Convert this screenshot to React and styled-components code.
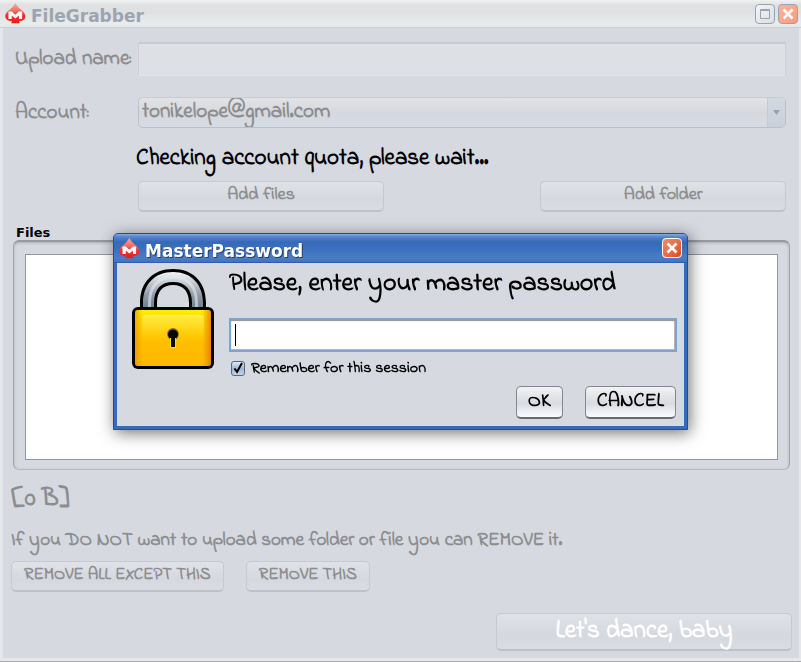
import React from "react";
import styled, { createGlobalStyle } from "styled-components";

const HAND = `"Indie Flower", Lato, sans-serif`;
const SYSTEM = `"DejaVu Sans", sans-serif`;

const GlobalStyle = createGlobalStyle`
  * { box-sizing: border-box; }
  body { margin: 0; background: #d6d9e0; font-variant-ligatures: none; }
  button, input, select { font: inherit; font-variant-ligatures: none; }
`;

const Window = styled.div`
  display: flex;
  flex-direction: column;
  min-height: 100vh;
  background: #d6d9e0;
  border-bottom: 1px solid #a9abad;
  font-family: ${HAND};
  font-weight: bold;
  color: #8c8d8f;
`;

const TitleBar = styled.header`
  display: flex;
  align-items: center;
  gap: 5px;
  height: 28px;
  padding: 0 3px 0 5px;
  background: linear-gradient(#f0f2f2 0, #dfe1e2 5px, #dfe1e2 12px, #e9ebec 24px, #e4e6e7 100%);
  border-bottom: 1px solid #cdcfd1;
`;

const Title = styled.h1`
  flex: 1;
  margin: 0;
  padding-top: 4px;
  font: bold 17px/22px ${SYSTEM};
  color: #9ba5b2;
`;

const WindowButton = styled.button`
  display: grid;
  place-items: center;
  width: 20px;
  height: 20px;
  padding: 0;
  border: 1px solid ${(p) => (p.$active ? "#fff" : "#98a3b3")};
  border-radius: 4px;
  background: ${(p) =>
    p.$active
      ? "linear-gradient(135deg, #f08d6c, #e4683e 60%, #d94a1c)"
      : p.$close
        ? "linear-gradient(135deg, #ffb49b, #f79a7d)"
        : "linear-gradient(135deg, #f4f5f6, #dcdee0)"};
  & + & { margin-left: -2px; }
`;

const Content = styled.main`
  flex: 1;
  display: flex;
  flex-direction: column;
  padding: 14px 7px 7px 8px;
  border: solid #e6e7ea;
  border-width: 0 2px 3px 3px;
`;

const Form = styled.div`
  display: grid;
  grid-template-columns: 123px 1fr;
  row-gap: 21px;
  align-items: center;
  padding: 0 6px 0 4px;
`;

const FieldLabel = styled.label`
  font-size: 21px;
  line-height: 24px;
`;

const NameInput = styled.input`
  width: 100%;
  height: 34px;
  padding: 4px 6px;
  border: 1px solid #ced1d6;
  border-top: 2px solid #c8cbd0;
  border-bottom-color: #e2e4e8;
  background: #dde0e5;
  font-size: 21px;
`;

const SelectBox = styled.div`
  display: grid;
  grid-template-columns: 1fr 18px;
  height: 31px;
  border: 1px solid #b9c0ca;
  border-top-color: #c8cbd1;
  border-radius: 5px;
  background: linear-gradient(#e1e3e7, #d6d8dd 50%, #d7dbe4);
  overflow: hidden;
`;

const AccountSelect = styled.select`
  grid-column: 1 / 3;
  grid-row: 1;
  appearance: none;
  width: 100%;
  height: 29px;
  padding: 0 22px 0 3px;
  border: 0;
  background: transparent;
  color: #8c8d8f;
  opacity: 1;
  font-size: 21px;
  line-height: 29px;
`;

const SelectArrow = styled.span`
  grid-column: 2;
  grid-row: 1;
  display: grid;
  place-items: center;
  pointer-events: none;
  border-left: 1px solid #c3cbd6;
  background: linear-gradient(#d4d9e0, #c8d0db);
`;

const Status = styled.p`
  margin: 19px 0 10px;
  padding-left: 125px;
  font-size: 23px;
  line-height: 24px;
  color: #000;
`;

const AddRow = styled.div`
  display: grid;
  grid-template-columns: 246px 246px;
  justify-content: space-between;
  padding: 0 6px 0 127px;
`;

const BUTTON_FONT = { small: "17px", medium: "18px", large: "25px" };

const SoftButton = styled.button`
  height: ${(p) => (p.$size === "large" ? "38px" : "31px")};
  padding: 0 12px 2px;
  border: 1px solid #c6c9cd;
  border-bottom: 2px solid #bec1c6;
  border-radius: 5px;
  background: linear-gradient(#dfe2e6, #d5d8df 60%, #d9dce0);
  color: ${(p) => (p.$size === "large" ? "#fff" : "#8c8d8f")};
  font-size: ${(p) => BUTTON_FONT[p.$size]};
  line-height: 24px;
  white-space: nowrap;
`;

const FilesGroup = styled.section`
  flex: 1;
  display: flex;
  flex-direction: column;
  margin: 13px 2px 0;
`;

const FilesTitle = styled.h2`
  margin: 0;
  padding-left: 3px;
  font: bold 13px/15px ${SYSTEM};
  color: #000;
`;

const FilesFrame = styled.div`
  flex: 1;
  display: flex;
  padding: 12px 11px 9px;
  border: 1px solid #a2a5aa;
  border-top: 2px solid #96999d;
  border-bottom-color: #b6b9bf;
  border-radius: 6px;
  box-shadow: inset 0 1px 3px #abaeb4;
`;

const FilesList = styled.ul`
  flex: 1;
  margin: 0;
  padding: 0;
  list-style: none;
  background: #fff;
  border: 1px solid #9297a1;
`;

const Total = styled.p`
  margin: 14px 0 0;
  font-size: 25px;
  line-height: 30px;
`;

const Hint = styled.p`
  margin: 15px 0 8px;
  font-size: 19px;
  line-height: 24px;
`;

const RemoveRow = styled.div`
  display: flex;
  gap: 22px;
`;

const SubmitRow = styled.div`
  display: grid;
  grid-template-columns: 296px;
  justify-content: end;
  margin-top: 21px;
`;

const Overlay = styled.div`
  position: fixed;
  inset: 1px 0 0;
  display: grid;
  place-items: center;
`;

const Dialog = styled.section`
  width: 575px;
  max-width: 100%;
  border: 1px solid #234f91;
  border-radius: 5px 5px 0 0;
  background: #356bba;
  box-shadow: 2px 3px 16px rgba(0, 0, 0, 0.55);
  padding: 0 3px 3px;
  font-family: ${HAND};
  font-weight: bold;
  color: #000;
`;

const DialogBar = styled.header`
  display: flex;
  align-items: center;
  gap: 5px;
  height: 29px;
  margin: 0 -3px;
  padding: 0 5px;
  border-radius: 4px 4px 0 0;
  border-bottom: 1px solid #2c5fae;
  background: linear-gradient(#88aade 0, #5783c6 3px, #356ab8 8px, #3a70be 15px, #4c7cc7 24px, #4272bd 100%);
`;

const DialogTitle = styled.h2`
  flex: 1;
  margin: 0;
  padding-top: 5px;
  font: bold 17px/22px ${SYSTEM};
  color: #fff;
  text-shadow: 1px 1px 0 #23406d;
`;

const DialogBody = styled.form`
  display: grid;
  grid-template-columns: 82px 1fr;
  column-gap: 15px;
  padding: 6px 7px 7px 15px;
  background: #d6d9e0;
`;

const Fields = styled.div`
  display: flex;
  flex-direction: column;
  align-items: flex-start;
`;

const Prompt = styled.label`
  font-size: 26px;
  line-height: 30px;
  margin-bottom: 19px;
`;

const PasswordInput = styled.input`
  width: 100%;
  height: 34px;
  padding: 2px 4px;
  border: 2px solid #79a5d6;
  background: #fff;
  box-shadow: inset 0 1px 1px #929292, inset -1px -1px 0 #b8b8b8;
  font-size: 22px;
  outline: none;
  &:placeholder-shown {
    caret-color: transparent;
    background: linear-gradient(#000, #000) 4px center / 1px 22px no-repeat #fff;
  }
`;

const CheckLabel = styled.label`
  display: flex;
  align-items: center;
  gap: 6px;
  margin: 7px 0 9px 2px;
  font-size: 16px;
  line-height: 18px;
`;

const CheckBox = styled.span`
  display: grid;
  width: 14px;
  height: 15px;
  & > * { grid-area: 1 / 1; }
`;

const CheckInput = styled.input`
  appearance: none;
  margin: 0;
  border: 1px solid #55687f;
  border-radius: 3px;
  background: linear-gradient(#e2eaf3, #9fb6d0 50%, #c4d7e9);
  &:not(:checked) + svg { visibility: hidden; }
`;

const Actions = styled.div`
  align-self: flex-end;
  display: flex;
  gap: 22px;
  padding-right: 1px;
`;

const ActionButton = styled.button`
  height: 33px;
  padding: 0 11px;
  border: 1px solid #84878b;
  border-bottom: 2px solid #66696d;
  border-radius: 5px;
  background: linear-gradient(#f2f3f5, #d8dbe1 55%, #fafcff);
  font-size: 20px;
  line-height: 24px;
`;

function SpadeLogo({ faded }) {
  const id = faded ? "spadeFaded" : "spade";
  return (
    <svg width="21" height="21" viewBox="0 0 21 21" aria-hidden="true">
      <defs>
        <linearGradient id={id} x1="0" y1="0" x2="0" y2="1">
          <stop offset="0" stopColor={faded ? "#f7b1a8" : "#f3aaa6"} />
          <stop offset="0.4" stopColor="#ee6b62" />
          <stop offset="0.62" stopColor="#ef3025" />
          <stop offset="1" stopColor="#e81f13" />
        </linearGradient>
      </defs>
      <path
        fill={`url(#${id})`}
        d="M10.300 0C12 3 14 5 17 7.400c2.400 2 3.400 3.700 3.300 6.100-.2 3.400-3 5-6.300 4.200l.7 2.600H6.300l.6-2.600c-3.200.8-6.400-.8-6.600-4.200C.2 11 1.300 9.400 3.600 7.400 6.600 5 8.700 3 10.300 0z"
      />
      <path d="M3.500 16V8.500h3.200l3.600 3.200 3.600-3.200h3.200V16h-3.200v-3.600l-3.600 3.200-3.600-3.200V16z" fill="#fff" />
    </svg>
  );
}

function Cross() {
  return (
    <svg width="12" height="12" viewBox="0 0 12 12" aria-hidden="true">
      <path d="M1.500 1.500l9 9m0-9l-9 9" stroke="#fff" strokeWidth="2.600" />
    </svg>
  );
}

function Padlock() {
  return (
    <svg width="82" height="101" viewBox="0 0 82 101" aria-hidden="true">
      <defs>
        <linearGradient id="steel" x1="0" y1="0" x2="0" y2="1">
          <stop offset="0" stopColor="#f4f5f7" />
          <stop offset="0.25" stopColor="#c9ced5" />
          <stop offset="0.6" stopColor="#8e99a6" />
          <stop offset="1" stopColor="#6d7988" />
        </linearGradient>
        <linearGradient id="gold" x1="0" y1="0" x2="0" y2="1">
          <stop offset="0" stopColor="#ffee00" />
          <stop offset="0.2" stopColor="#ffd800" />
          <stop offset="0.6" stopColor="#ffbd00" />
          <stop offset="1" stopColor="#ffb800" />
        </linearGradient>
        <linearGradient id="goldEdge" x1="0" y1="0" x2="1" y2="0">
          <stop offset="0" stopColor="#e78900" stopOpacity="0.6" />
          <stop offset="0.1" stopColor="#e78900" stopOpacity="0" />
          <stop offset="0.88" stopColor="#e78900" stopOpacity="0" />
          <stop offset="1" stopColor="#dc7600" stopOpacity="0.8" />
        </linearGradient>
        <linearGradient id="gloss" x1="0" y1="0" x2="0" y2="1">
          <stop offset="0" stopColor="#fff57a" stopOpacity="0.6" />
          <stop offset="1" stopColor="#ffe040" stopOpacity="0" />
        </linearGradient>
      </defs>
      <path
        d="M8 44V34C8 13 21 0 41 0s33 13 33 34v10H57V34c0-12-6-18-16-18s-16 6-16 18v10z"
        fill="#000"
      />
      <path
        d="M11 42V34C11 15 23 3 41 3s30 12 30 31v8H60v-8c0-14-7-21-19-21s-19 7-19 21v8z"
        fill="url(#steel)"
      />
      <path d="M17.500 42v-8C17.500 18 26 8 41 8s23.500 10 23.500 26v8" fill="none" stroke="#e6eaef" strokeOpacity="0.6" strokeWidth="3" />
      <rect y="38" width="82" height="62" rx="6" fill="#000" />
      <rect x="3" y="41" width="76" height="56" rx="3" fill="url(#gold)" />
      <rect x="3" y="41" width="76" height="56" rx="3" fill="url(#goldEdge)" />
      <rect x="10" y="46" width="62" height="25" rx="2" fill="url(#gloss)" />
      <circle cx="41" cy="65" r="6" fill="#9c7300" />
      <circle cx="41" cy="65.500" r="5" fill="#090600" />
      <rect x="38" y="69" width="6" height="10" fill="#ffdf00" />
      <rect x="39" y="68" width="4" height="10" fill="#090600" />
    </svg>
  );
}

export default function App() {
  return (
    <>
      <GlobalStyle />
      <Window>
        <TitleBar>
          <SpadeLogo faded />
          <Title>FileGrabber</Title>
          <WindowButton type="button" aria-label="Maximize">
            <svg width="10" height="10" viewBox="0 0 10 10" aria-hidden="true">
              <path d="M.5.5h9v9h-9zM0 1.500h10" fill="none" stroke="#98a3b3" />
            </svg>
          </WindowButton>
          <WindowButton type="button" aria-label="Close window" $close>
            <Cross />
          </WindowButton>
        </TitleBar>
        <Content>
          <Form>
            <FieldLabel htmlFor="upload-name">Upload name:</FieldLabel>
            <NameInput id="upload-name" disabled />
            <FieldLabel htmlFor="account">Account:</FieldLabel>
            <SelectBox>
              <AccountSelect id="account" disabled defaultValue="tonikelope@gmail.com">
                <option>tonikelope@gmail.com</option>
              </AccountSelect>
              <SelectArrow>
                <svg width="7" height="5" viewBox="0 0 7 5" aria-hidden="true">
                  <path d="M0 0h7L3.500 5z" fill="#9aa2ad" />
                </svg>
              </SelectArrow>
            </SelectBox>
          </Form>
          <Status>Checking account quota, please wait...</Status>
          <AddRow>
            <SoftButton type="button" disabled $size="medium">Add files</SoftButton>
            <SoftButton type="button" disabled $size="medium">Add folder</SoftButton>
          </AddRow>
          <FilesGroup aria-labelledby="files-title">
            <FilesTitle id="files-title">Files</FilesTitle>
            <FilesFrame>
              <FilesList />
            </FilesFrame>
          </FilesGroup>
          <Total>[0 B]</Total>
          <Hint>If you DO NOT want to upload some folder or file you can REMOVE it.</Hint>
          <RemoveRow>
            <SoftButton type="button" disabled $size="small">REMOVE ALL EXCEPT THIS</SoftButton>
            <SoftButton type="button" disabled $size="small">REMOVE THIS</SoftButton>
          </RemoveRow>
          <SubmitRow>
            <SoftButton type="button" disabled $size="large">Let's dance, baby</SoftButton>
          </SubmitRow>
        </Content>
      </Window>
      <Overlay>
        <Dialog role="dialog" aria-modal="true" aria-labelledby="dialog-title">
          <DialogBar>
            <SpadeLogo />
            <DialogTitle id="dialog-title">MasterPassword</DialogTitle>
            <WindowButton type="button" aria-label="Close dialog" $active>
              <Cross />
            </WindowButton>
          </DialogBar>
          <DialogBody onSubmit={(e) => e.preventDefault()}>
            <Padlock />
            <Fields>
              <Prompt htmlFor="password">Please, enter your master password</Prompt>
              <PasswordInput id="password" type="password" placeholder=" " autoFocus />
              <CheckLabel>
                <CheckBox>
                  <CheckInput type="checkbox" defaultChecked />
                  <svg width="14" height="15" viewBox="0 0 14 15" aria-hidden="true">
                    <path d="M3.500 7.500l2.500 3.500 5-9" fill="none" stroke="#000" strokeWidth="2" />
                  </svg>
                </CheckBox>
                Remember for this session
              </CheckLabel>
              <Actions>
                <ActionButton type="submit">OK</ActionButton>
                <ActionButton type="button">CANCEL</ActionButton>
              </Actions>
            </Fields>
          </DialogBody>
        </Dialog>
      </Overlay>
    </>
  );
}
